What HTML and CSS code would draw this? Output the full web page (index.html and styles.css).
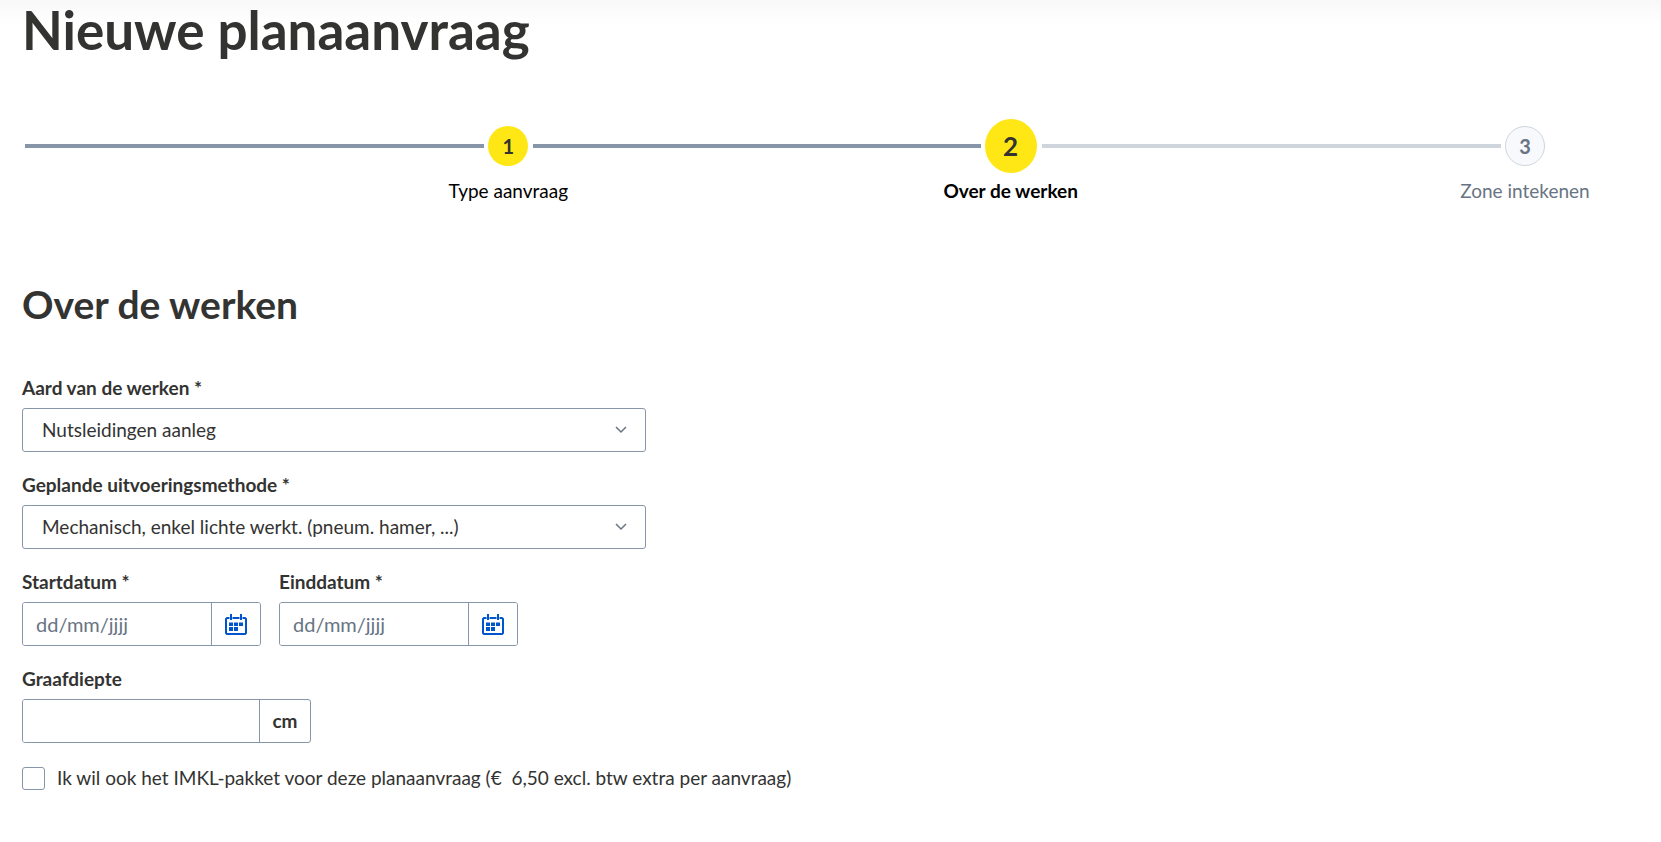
FILE: index.html
```
<!DOCTYPE html>
<html lang="nl">
<head>
    <meta charset="UTF-8">
    <meta name="viewport" content="width=device-width, initial-scale=1">
    <title>Nieuwe planaanvraag</title>
    <link rel="stylesheet" href="styles.css">
</head>
<body>
    <main class="page">
        <h1>Nieuwe planaanvraag</h1>

        <ol class="steps">
            <li class="step done">
                <div class="step-point">
                    <span class="step-number">1</span>
                    <span class="step-label">Type aanvraag</span>
                </div>
            </li>
            <li class="step current" aria-current="step">
                <div class="step-point">
                    <span class="step-number">2</span>
                    <span class="step-label">Over de werken</span>
                </div>
            </li>
            <li class="step">
                <div class="step-point">
                    <span class="step-number">3</span>
                    <span class="step-label">Zone intekenen</span>
                </div>
            </li>
        </ol>

        <h2>Over de werken</h2>

        <form class="form">
            <div class="form-group">
                <label for="aard">Aard van de werken *</label>
                <div class="select-wrap">
                    <select id="aard" name="aard" required>
                        <option>Nutsleidingen aanleg</option>
                    </select>
                    <svg class="chevron" viewBox="0 0 12 8" aria-hidden="true"><path d="M1 1l5 5 5-5"/></svg>
                </div>
            </div>

            <div class="form-group">
                <label for="methode">Geplande uitvoeringsmethode *</label>
                <div class="select-wrap">
                    <select id="methode" name="methode" required>
                        <option>Mechanisch, enkel lichte werkt. (pneum. hamer, ...)</option>
                    </select>
                    <svg class="chevron" viewBox="0 0 12 8" aria-hidden="true"><path d="M1 1l5 5 5-5"/></svg>
                </div>
            </div>

            <div class="form-row">
                <div class="form-group">
                    <label for="startdatum">Startdatum *</label>
                    <div class="input-group date">
                        <input type="text" id="startdatum" name="startdatum" placeholder="dd/mm/jjjj" required>
                        <button type="button" aria-label="Kies startdatum">
                            <svg class="calendar" viewBox="0 0 22 21" aria-hidden="true">
                                <path class="frame" d="M4.500 4H2L1 5v14l1 1h18l1-1V5l-1-1h-2.500M7.500 4h7M6 0v6M16 0v6"/>
                                <path d="M4 8.500h4v3.500H4zM9 8.500h4v3.500H9zM14 8.500h4v3.500h-4zM4 13h4v4H4zM9 13h4v4H9z"/>
                            </svg>
                        </button>
                    </div>
                </div>
                <div class="form-group">
                    <label for="einddatum">Einddatum *</label>
                    <div class="input-group date">
                        <input type="text" id="einddatum" name="einddatum" placeholder="dd/mm/jjjj" required>
                        <button type="button" aria-label="Kies einddatum">
                            <svg class="calendar" viewBox="0 0 22 21" aria-hidden="true">
                                <path class="frame" d="M4.500 4H2L1 5v14l1 1h18l1-1V5l-1-1h-2.500M7.500 4h7M6 0v6M16 0v6"/>
                                <path d="M4 8.500h4v3.500H4zM9 8.500h4v3.500H9zM14 8.500h4v3.500h-4zM4 13h4v4H4zM9 13h4v4H9z"/>
                            </svg>
                        </button>
                    </div>
                </div>
            </div>

            <div class="form-group">
                <label for="graafdiepte">Graafdiepte</label>
                <div class="input-group depth">
                    <input type="text" id="graafdiepte" name="graafdiepte" inputmode="numeric">
                    <span class="unit">cm</span>
                </div>
            </div>

            <div class="checkbox">
                <input type="checkbox" id="imkl" name="imkl">
                <label for="imkl">Ik wil ook het IMKL-pakket voor deze planaanvraag (€&nbsp; 6,50 excl. btw extra per aanvraag)</label>
            </div>
        </form>
    </main>
</body>
</html>
```
FILE: styles.css
```
* {
    box-sizing: border-box;
}
body {
    margin: 0;
    font-family: Lato, "Open Sans", sans-serif;
    font-size: 19px;
    line-height: 24px;
    color: #333332;
    background: #fff linear-gradient(#f8f8f8, #fff 24px) no-repeat;
}
.page {
    padding: 0 22px;
}
h1 {
    margin: 0;
    font-size: 53px;
    line-height: 60px;
}
h2 {
    margin: 0 0 48px;
    font-size: 39px;
    line-height: 48px;
}

/* steps */
.steps {
    display: flex;
    gap: 5px;
    margin: 59px 94px 77px 3px;
    padding: 0;
    list-style: none;
}
.step {
    flex: 1;
    display: flex;
}
.step::before {
    content: "";
    flex: 1;
    height: 4px;
    margin: 25px 4px 0 0;
    background: #cfd5dd;
}
.step.done::before, .step.current::before {
    background: #8695a8;
}
.step-point {
    width: 40px;
    display: flex;
    flex-direction: column;
    align-items: center;
    color: #687483;
}
.step-number {
    display: flex;
    align-items: center;
    justify-content: center;
    width: 40px;
    height: 40px;
    margin: 7px 0;
    border: 1px solid #cfd5dd;
    border-radius: 50%;
    background: #f7f9fc;
    font-size: 20px;
    font-weight: bold;
}
.step-label {
    margin-top: 6px;
    white-space: nowrap;
}
.done .step-number, .current .step-number {
    border: none;
    background: #ffe615;
    color: #333332;
}
.done .step-label, .current .step-label {
    color: #000;
}
.current .step-point {
    width: 52px;
}
.current .step-number {
    width: 52px;
    height: 54px;
    margin: 0;
    font-size: 26px;
}
.current .step-label {
    font-weight: bold;
}

/* form */
.form-group {
    margin-bottom: 21px;
}
.form-group label {
    display: block;
    margin-bottom: 8px;
    font-weight: bold;
}
.form-row {
    display: flex;
    gap: 18px;
}
input, select, button {
    font: inherit;
    color: inherit;
}
.select-wrap {
    position: relative;
    max-width: 624px;
}
select {
    appearance: none;
    width: 100%;
    height: 44px;
    padding: 0 44px 0 19px;
    border: 1px solid #8695a8;
    border-radius: 3px;
    background: #fff;
}
.chevron {
    position: absolute;
    top: 18px;
    right: 19px;
    width: 12px;
    height: 8px;
    fill: none;
    stroke: #687483;
    stroke-width: 1.5;
    pointer-events: none;
}
.input-group {
    display: flex;
    height: 44px;
    border: 1px solid #8695a8;
    border-radius: 3px;
    overflow: hidden;
}
.input-group input {
    flex: 1;
    min-width: 0;
    padding: 0 13px;
    border: none;
    background: #fff;
}
.input-group input::placeholder {
    color: #687483;
    opacity: 1;
}
.date {
    width: 239px;
}
.date input {
    font-size: 20px;
}
.date button {
    display: flex;
    align-items: center;
    justify-content: center;
    width: 49px;
    padding: 0;
    border: none;
    border-left: 1px solid #8695a8;
    background: #fff;
    cursor: pointer;
}
.calendar {
    width: 22px;
    height: 21px;
    fill: #0055cc;
}
.calendar .frame {
    fill: none;
    stroke: #0055cc;
    stroke-width: 2;
}
.depth {
    width: 289px;
}
.unit {
    width: 51px;
    border-left: 1px solid #8695a8;
    font-weight: bold;
    line-height: 42px;
    text-align: center;
}
.checkbox {
    display: flex;
    align-items: center;
    gap: 12px;
    padding-top: 2px;
}
.checkbox input {
    appearance: none;
    width: 23px;
    height: 23px;
    margin: 0;
    border: 1px solid #8695a8;
    border-radius: 3px;
    background: #fff;
}
.checkbox input:checked {
    background: #0055cc;
}
```
